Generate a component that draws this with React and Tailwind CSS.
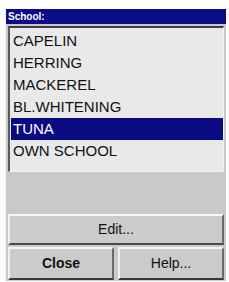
export default function App() {
  const items = ["CAPELIN", "HERRING", "MACKEREL", "BL.WHITENING", "TUNA", "OWN SCHOOL"]
  const selected = "TUNA"
  return (
    <div className="w-[229px] h-[282px] bg-white pt-[9px] pl-[5px] pr-[3px] pb-[1px] font-['Liberation_Sans',Arial,sans-serif]">
      <div className="h-full flex flex-col bg-[#c9c9c9] border-l border-[#f2f2f2]">
        <div className="h-[15px] shrink-0 bg-[#0b0b86] text-white text-[10px] font-bold leading-[15px] pl-[2px]">
          School:
        </div>
        <div className="mx-[2px] mt-[2px] h-[146px] shrink-0 bg-[#e9e9e9] border-t-2 border-l-2 border-t-[#3c3c3c] border-l-[#5a5a5a] border-b border-r border-b-[#f4f4f4] border-r-[#f4f4f4] pt-[2px] pl-[1px]">
          {items.map((it) => (
            <div
              key={it}
              className={
                it === selected
                  ? "h-[22px] leading-[22px] text-[15px] pl-[2px] bg-[#0a0a82] text-white"
                  : "h-[22px] leading-[22px] text-[15px] pl-[2px] text-[#111]"
              }
            >
              {it}
            </div>
          ))}
        </div>
        <div className="flex-1" />
        <div className="mx-[2px] flex flex-col gap-[2px] mb-[1px]">
          <button className="h-[31px] bg-[#cbcbcb] border-t-2 border-l-2 border-t-[#f6f6f6] border-l-[#f0f0f0] border-b-2 border-r-2 border-b-[#4a4a4a] border-r-[#6a6a6a] text-[14px] text-[#111]">
            Edit...
          </button>
          <div className="flex gap-[4px]">
            <button className="flex-1 h-[33px] bg-[#cbcbcb] border-t-2 border-l-2 border-t-[#f6f6f6] border-l-[#f0f0f0] border-b-2 border-r-2 border-b-[#3a3a3a] border-r-[#6a6a6a] text-[14px] font-bold text-[#111]">
              Close
            </button>
            <button className="flex-1 h-[33px] bg-[#cbcbcb] border-t-2 border-l-2 border-t-[#f6f6f6] border-l-[#f0f0f0] border-b-2 border-r-2 border-b-[#3a3a3a] border-r-[#6a6a6a] text-[14px] text-[#111]">
              Help...
            </button>
          </div>
        </div>
      </div>
    </div>
  )
}
